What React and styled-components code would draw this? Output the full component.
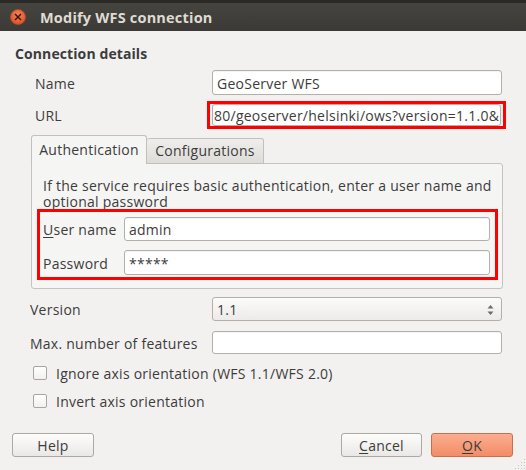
import React from 'react';
import styled, { createGlobalStyle } from 'styled-components';

const Global = createGlobalStyle`
  html, body { margin: 0; padding: 0; background: #f2f1f0; }
  body {
    font-family: "Open Sans", "DejaVu Sans", sans-serif;
    font-size: 14px;
    letter-spacing: 0.25px;
    color: #3c3c3c;
  }
  * { box-sizing: border-box; }
`;

const Window = styled.div`
  width: 526px;
  height: 470px;
  position: relative;
  display: flex;
  flex-direction: column;
  background: #f2f1f0;
  overflow: hidden;
`;

const TitleBar = styled.div`
  height: 31px;
  flex: none;
  display: flex;
  align-items: center;
  gap: 14px;
  padding: 3px 0 0 10px;
  background: linear-gradient(#2b2a27 0 3px, #45443f 3px, #3b3a36 100%);
  color: #dfdbd2;
  font-weight: 700;
  font-size: 14.5px;
  letter-spacing: 0.2px;
`;

const CloseButton = styled.div`
  width: 16px;
  height: 16px;
  border-radius: 50%;
  background: radial-gradient(circle at 50% 35%, #f5835a, #e2552b 75%);
  border: 1px solid #b34c27;
  display: flex;
  align-items: center;
  justify-content: center;
`;

const Body = styled.div`
  flex: 1;
  display: flex;
  flex-direction: column;
  padding-top: 13px;
`;

const SectionTitle = styled.div`
  margin-left: 15px;
  font-weight: 700;
  font-size: 14px;
  letter-spacing: 0.1px;
  line-height: 18px;
  height: 18px;
  padding-top: 1px;
  color: #3c3c3c;
`;

const Row = styled.div`
  display: grid;
  grid-template-columns: ${p => p.$labelW}px 1fr;
  align-items: center;
  margin-top: ${p => p.$top}px;
  padding-left: ${p => p.$left}px;
  padding-right: ${p => p.$right}px;
`;

const Label = styled.div`
  line-height: 16px;
  padding-top: 2px;
  white-space: nowrap;
`;

const Field = styled.div`
  height: ${p => p.$h}px;
  display: flex;
  align-items: center;
  justify-content: ${p => (p.$end ? 'flex-end' : 'flex-start')};
  background: #fff;
  border: 1px solid #b4b0a9;
  border-radius: 3px;
  padding: 1px ${p => p.$pad ?? 4}px 0;
  white-space: nowrap;
  overflow: hidden;
  box-shadow: inset 0 1px 1px rgba(0, 0, 0, 0.05);
`;

const RedFrame = styled.div`
  border: 3px solid #f00;
  padding: ${p => p.$pad};
`;

const Tabs = styled.div`
  margin: 6px 23px 0 31px;
  display: flex;
  flex-direction: column;
`;

const TabBar = styled.div`
  display: flex;
  align-items: flex-end;
  height: 29px;
  position: relative;
  z-index: 1;
  margin-bottom: -1px;
`;

const Tab = styled.div`
  width: ${p => p.$w}px;
  height: ${p => (p.$active ? 29 : 26)}px;
  display: flex;
  align-items: center;
  justify-content: center;
  border: 1px solid #c3c0bb;
  border-bottom: ${p => (p.$active ? 'none' : '1px solid #c3c0bb')};
  border-left: ${p => (p.$active ? '1px solid #c3c0bb' : 'none')};
  border-radius: 3px 3px 0 0;
  background: ${p =>
    p.$active ? '#f5f5f4' : 'linear-gradient(#efeeec, #dedcd9)'};
  padding-bottom: 1px;
`;

const Panel = styled.div`
  height: 126px;
  border: 1px solid #c6c3be;
  border-radius: 0 3px 3px 3px;
  background: #f5f5f4;
  padding: 13px 4px 8px 5px;
  display: flex;
  flex-direction: column;
`;

const HelpText = styled.div`
  margin-left: 6px;
  line-height: 16px;
  padding-top: 1px;
  height: 32px;
  white-space: nowrap;
`;

const CredGrid = styled.div`
  display: grid;
  grid-template-columns: 81px 1fr;
  grid-template-rows: 24px 25px;
  row-gap: 9px;
  align-items: center;
`;

const Mnemonic = styled.span`
  text-decoration: underline;
  text-underline-offset: 2px;
`;

const Select = styled.div`
  height: 24px;
  display: flex;
  align-items: center;
  justify-content: space-between;
  padding: 1px 7px 0 4px;
  border: 1px solid #b4b0a9;
  border-radius: 3px;
  background: linear-gradient(#fbfbfa, #ecebe9);
`;

const CheckRow = styled.div`
  display: flex;
  align-items: center;
  gap: 9px;
  height: 14px;
  margin-top: ${p => p.$top}px;
  padding-left: 33px;
`;

const CheckBox = styled.div`
  width: 14px;
  height: 14px;
  border: 1px solid #aaa69f;
  border-radius: 2px;
  background: linear-gradient(#ffffff, #f1f0ee);
`;

const ButtonRow = styled.div`
  margin-top: auto;
  display: flex;
  align-items: center;
  gap: 9px;
  padding: 0 13px 13px 12px;
`;

const Button = styled.div`
  width: ${p => p.$w}px;
  height: 24px;
  display: flex;
  align-items: center;
  justify-content: center;
  border-radius: 3px;
  border: 1px solid ${p => (p.$primary ? '#c7704e' : '#aca9a3')};
  background: ${p =>
    p.$primary
      ? 'linear-gradient(#fbae90, #f28c66)'
      : 'linear-gradient(#fdfdfc, #e9e8e6)'};
  margin-left: ${p => (p.$push ? 'auto' : '0')};
`;

const Grip = styled.svg`
  position: absolute;
  right: 0;
  bottom: 0;
`;

export default function App() {
  return (
    <>
      <Global />
      <Window>
        <TitleBar>
          <CloseButton>
            <svg width="8" height="8" viewBox="0 0 8 8">
              <path d="M1 1L7 7M7 1L1 7" stroke="#3a180b" strokeWidth="1.5" />
            </svg>
          </CloseButton>
          <span>Modify WFS connection</span>
        </TitleBar>
        <Body>
          <SectionTitle>Connection details</SectionTitle>
          <Row $labelW={177} $top={8} $left={35} $right={24}>
            <Label>Name</Label>
            <Field $h={25}>GeoServer WFS</Field>
          </Row>
          <Row $labelW={172} $top={6} $left={35} $right={21}>
            <Label>URL</Label>
            <RedFrame $pad="0 2px">
              <Field $h={22} $pad={1} $end>
                80/geoserver/helsinki/ows?version=1.1.0&amp;
              </Field>
            </RedFrame>
          </Row>
          <Tabs>
            <TabBar>
              <Tab $active $w={116}>Authentication</Tab>
              <Tab $w={117}>Configurations</Tab>
            </TabBar>
            <Panel>
              <HelpText>
                If the service requires basic authentication, enter a user name and
                <br />
                optional password
              </HelpText>
              <RedFrame $pad="5px 5px 2px 3px">
                <CredGrid>
                  <Label>
                    <Mnemonic>U</Mnemonic>ser name
                  </Label>
                  <Field $h={24}>admin</Field>
                  <Label>Password</Label>
                  <Field $h={25}>*****</Field>
                </CredGrid>
              </RedFrame>
            </Panel>
          </Tabs>
          <Row $labelW={182} $top={8} $left={30} $right={24}>
            <Label>Version</Label>
            <Select>
              <span>1.1</span>
              <svg width="7" height="12" viewBox="0 0 7 12">
                <path d="M3.5 1L6.5 4.5H0.5Z" fill="#6f6c67" />
                <path d="M3.5 11L6.5 7.5H0.5Z" fill="#6f6c67" />
              </svg>
            </Select>
          </Row>
          <Row $labelW={182} $top={10} $left={30} $right={24}>
            <Label>Max. number of features</Label>
            <Field $h={23} />
          </Row>
          <CheckRow $top={12}>
            <CheckBox />
            <Label>Ignore axis orientation (WFS 1.1/WFS 2.0)</Label>
          </CheckRow>
          <CheckRow $top={14}>
            <CheckBox />
            <Label>Invert axis orientation</Label>
          </CheckRow>
          <ButtonRow>
            <Button $w={82}>Help</Button>
            <Button $w={81} $push>
              <span>
                <Mnemonic>C</Mnemonic>ancel
              </span>
            </Button>
            <Button $w={82} $primary>
              <span>
                <Mnemonic>O</Mnemonic>K
              </span>
            </Button>
          </ButtonRow>
        </Body>
        <Grip width="12" height="12" viewBox="0 0 12 12">
          {[
            [10, 2], [10, 5], [7, 5], [10, 8], [7, 8], [4, 8], [10, 11], [7, 11], [4, 11], [1, 11],
          ].map(([x, y], i) => (
            <rect key={i} x={x} y={y - 1} width="1" height="1" fill="#c9c6c1" />
          ))}
        </Grip>
      </Window>
    </>
  );
}
